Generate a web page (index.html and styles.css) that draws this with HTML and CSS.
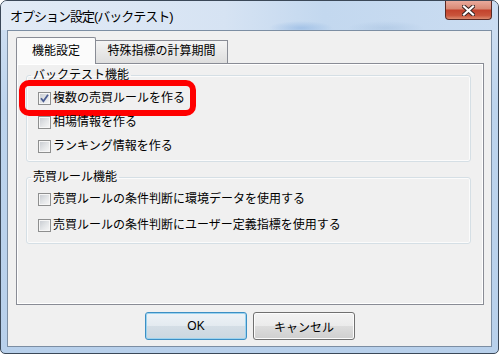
FILE: index.html
```html
<!DOCTYPE html><html><head><meta charset="utf-8"/>
<title>オプション設定(バックテスト)</title>
<link rel="stylesheet" href="styles.css">
</head>
<body>

<div class="window">
  <div class="titlebar">
    <span class="title">オプション設定(バックテスト)</span>
    <div class="close">
      <svg width="13" height="11" viewBox="0 0 13 11"><path d="M2 1.5L11 9.5M11 1.5L2 9.5" stroke="#3a2624" stroke-width="4.2" stroke-linecap="square"/><path d="M2 1.5L11 9.5M11 1.5L2 9.5" stroke="#fff" stroke-width="2.2" stroke-linecap="square"/></svg>
    </div>
  </div>
  <div class="client">
    <div class="tabs">
      <div class="tab active">機能設定</div>
      <div class="tab">特殊指標の計算期間</div>
    </div>
    <div class="panel">
      <fieldset class="group first">
        <legend>バックテスト機能</legend>
        <label class="check"><span class="box"><svg width="11" height="11" viewBox="0 0 11 11"><path d="M2 5.2L4.4 8.2L9 1.8" fill="none" stroke="#4b5d92" stroke-width="1.8"/></svg></span>複数の売買ルールを作る<span class="ring"></span></label>
        <label class="check"><span class="box"></span>相場情報を作る</label>
        <label class="check"><span class="box"></span>ランキング情報を作る</label>
      </fieldset>
      <fieldset class="group second">
        <legend>売買ルール機能</legend>
        <label class="check"><span class="box"></span>売買ルールの条件判断に環境データを使用する</label>
        <label class="check"><span class="box"></span>売買ルールの条件判断にユーザー定義指標を使用する</label>
      </fieldset>
    </div>
    <div class="buttons">
      <button class="btn default">OK</button>
      <button class="btn">キャンセル</button>
    </div>
  </div>
</div>

</body>
</html>
```

FILE: styles.css
```css
body {
  margin: 0;
  background: #fff;
  font-family: "Liberation Sans", "Noto Sans CJK JP", sans-serif;
  font-size: 12px;
  color: #000;
}
/* window frame */
.window {
  width: 499px;
  height: 354px;
  box-sizing: border-box;
  border: 1px solid #3b4858;
  border-radius: 7px 7px 5px 5px;
  padding: 0 6px 6px;
  background: linear-gradient(#d2e1f3, #bdd4ed 30%, #b8d0eb);
  display: flex;
  flex-direction: column;
  overflow: hidden;
}
.titlebar {
  height: 29px;
  margin: 0 -6px;
  padding: 0 6px 0 9px;
  display: flex;
  justify-content: space-between;
  align-items: flex-start;
  background:
    radial-gradient(ellipse 32px 7px at 300px 27px, rgba(120, 165, 220, .45), transparent),
    radial-gradient(ellipse 38px 7px at 385px 27px, rgba(150, 180, 215, .35), transparent),
    linear-gradient(to right, #e2ebf6, #d6e3f3 45%, #c3d8ef 65%, #cadcf1);
}
.title {
  font-size: 13px;
  line-height: 31px;
  letter-spacing: -1px;
}
.close {
  width: 47px;
  height: 19px;
  box-sizing: border-box;
  border: 1px solid #5a2a24;
  border-top: 0;
  border-radius: 0 0 4px 4px;
  background: linear-gradient(#e9aa9c, #d98a76 42%, #c3432d 52%, #c9543b 80%, #dc8a6e);
  display: flex;
  align-items: center;
  justify-content: center;
}
/* client area */
.client {
  flex: 1;
  border: 1px solid #7c8ea3;
  background: #f0f0f0;
  padding: 6px 0 0 8px;
}
.tabs {
  display: flex;
  align-items: flex-end;
  height: 26px;
}
.tab {
  box-sizing: border-box;
  height: 23px;
  line-height: 21px;
  text-align: center;
  border: 1px solid #898c95;
  border-bottom: 0;
  background: linear-gradient(#f4f4f4, #e6e6e6 60%, #dedede);
}
.tab + .tab {
  width: 132px;
  border-left: 0;
}
.tab.active {
  width: 80px;
  height: 27px;
  line-height: 26px;
  margin-bottom: -1px;
  position: relative;
  z-index: 1;
  border-radius: 2px 2px 0 0;
  background: #fbfbfb;
}
.panel {
  width: 468px;
  height: 242px;
  box-sizing: border-box;
  border: 1px solid #898c95;
  box-shadow: inset 0 0 0 1px #fff;
  padding: 4px 12px 0 9px;
}
/* group boxes */
.group {
  margin: 0;
  min-width: 0;
  border: 1px solid #d5dfe5;
  border-radius: 3px;
  box-shadow: inset 0 0 0 1px #fbfbfb;
  padding: 10px 0 8px 11px;
  display: flex;
  flex-direction: column;
  gap: 11px;
}
.group.second {
  margin-top: 8px;
  padding: 9px 0 11px 11px;
  gap: 13px;
}
legend {
  margin-left: -7px;
  padding: 0 2px;
  height: 14px;
  line-height: 14px;
}
.check {
  position: relative;
  display: flex;
  align-items: center;
  gap: 2px;
  height: 13px;
  line-height: 13px;
}
.box {
  width: 13px;
  height: 13px;
  box-sizing: border-box;
  border: 1px solid #8e8f8f;
  box-shadow: inset 0 0 0 1px #f6f6f6;
  background: linear-gradient(135deg, #c5c9cf, #e4e6e8 55%, #f8f8f8);
  flex: none;
}
.box svg {
  display: block;
}
.ring {
  position: absolute;
  left: -19px;
  top: -12px;
  width: 177px;
  height: 36px;
  box-sizing: border-box;
  border: 6px solid #ff0000;
  border-radius: 10px;
}
/* buttons */
.buttons {
  width: 468px;
  display: flex;
  justify-content: center;
  gap: 6px;
  margin-top: 7px;
}
.btn {
  width: 102px;
  height: 28px;
  border: 1px solid #707070;
  border-radius: 3px;
  font: 12px "Liberation Sans", "Noto Sans CJK JP", sans-serif;
  color: #000;
  padding: 0;
  background: linear-gradient(#f3f3f3, #ebebeb 50%, #dddddd 50%, #cfcfcf);
  box-shadow: inset 0 0 0 1px #fcfcfc;
}
.btn.default {
  border-color: #3c8fc4;
  box-shadow: inset 0 0 0 1px #9cd3ef;
  background: linear-gradient(#eef3f7, #e3eaf0 50%, #d4dee6 50%, #cbd7e0);
}
```
